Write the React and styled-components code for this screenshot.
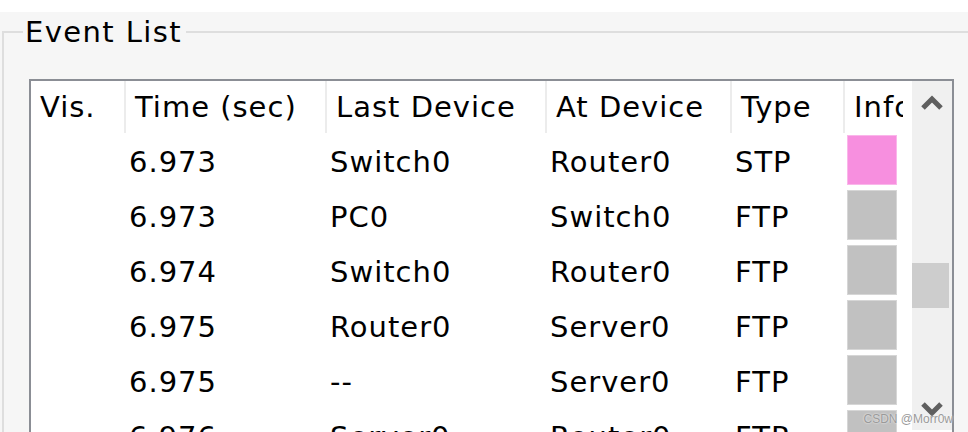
import React from "react"
import styled, { createGlobalStyle } from "styled-components"

const events = [
  { time: "6.973", last: "Switch0", at: "Router0", type: "STP", color: "#f78fdf" },
  { time: "6.973", last: "PC0", at: "Switch0", type: "FTP", color: "#c1c1c1" },
  { time: "6.974", last: "Switch0", at: "Router0", type: "FTP", color: "#c1c1c1" },
  { time: "6.975", last: "Router0", at: "Server0", type: "FTP", color: "#c1c1c1" },
  { time: "6.975", last: "--", at: "Server0", type: "FTP", color: "#c1c1c1" },
  { time: "6.976", last: "Server0", at: "Router0", type: "FTP", color: "#c1c1c1" },
]

const columns = ["Vis.", "Time (sec)", "Last Device", "At Device", "Type", "Info"]

function Chevron({ down }) {
  return (
    <svg width="22" height="17" viewBox="0 0 22 17">
      <path
        d={down ? "M2 4 L11 13 L20 4" : "M2 13 L11 4 L20 13"}
        fill="none"
        stroke="#5f5f5f"
        strokeWidth="5"
      />
    </svg>
  )
}

function App() {
  const rows = events.map((ev, i) => {
    return (
      <Row key={i}>
        <Cell />
        <Cell>{ev.time}</Cell>
        <Cell>{ev.last}</Cell>
        <Cell>{ev.at}</Cell>
        <Cell>{ev.type}</Cell>
        <InfoCell>
          <Swatch color={ev.color} />
        </InfoCell>
      </Row>
    )
  })

  return (
    <>
      <GlobalStyle />
      <Page>
        <Panel>
          <Group>
            <Legend>Event List</Legend>
            <ListBox>
              <Table>
                <Header>
                  {columns.map((c) => (
                    <HeadCell key={c}>{c}</HeadCell>
                  ))}
                </Header>
                {rows}
              </Table>
              <ScrollBar>
                <ArrowButton>
                  <Chevron />
                </ArrowButton>
                <Thumb />
                <ArrowButton bottom>
                  <Chevron down />
                </ArrowButton>
              </ScrollBar>
            </ListBox>
          </Group>
        </Panel>
        <Watermark>CSDN @Morr0w</Watermark>
      </Page>
    </>
  )
}

export default App

const GlobalStyle = createGlobalStyle`
  body {
    margin: 0;
    background: #ffffff;
    font-family: "DejaVu Sans", Verdana, sans-serif;
  }
`

const Page = styled.div`
  position: relative;
  width: 968px;
  height: 432px;
  overflow: hidden;
  padding-top: 12px;
  box-sizing: border-box;
`

const Panel = styled.div`
  height: 420px;
  background: #f6f6f6;
  padding: 3px 0 0 2px;
  box-sizing: border-box;
`

const Group = styled.fieldset`
  margin: 0;
  padding: 0;
  width: 1000px;
  height: 500px;
  border: 2px solid #dedede;
  border-right: none;
  box-sizing: border-box;
`

const Legend = styled.legend`
  margin-left: 19px;
  padding: 0 4px 0 2px;
  font-size: 29px;
  letter-spacing: 1.4px;
  line-height: 34px;
  color: #000;
`

const ListBox = styled.div`
  display: flex;
  margin-top: 30px;
  margin-left: 25px;
  width: 925px;
  height: 420px;
  border: 2px solid #8b8e95;
  border-bottom: none;
  box-sizing: border-box;
  background: #fff;
`

const Table = styled.div`
  width: 881px;
  overflow: hidden;
`

const gridCols = "95px 201px 220px 185px 113px 67px"

const Header = styled.div`
  display: grid;
  grid-template-columns: ${gridCols};
  height: 52px;
`

const HeadCell = styled.div`
  display: flex;
  align-items: center;
  padding-left: 9px;
  font-size: 29px;
  letter-spacing: 1px;
  color: #000;
  white-space: nowrap;
  overflow: hidden;
  border-right: 2px solid #ececec;
  &:last-child {
    border-right: none;
    clip-path: inset(0 9px 0 0);
  }
`

const Row = styled.div`
  display: grid;
  grid-template-columns: ${gridCols};
  height: 55px;
`

const Cell = styled.div`
  display: flex;
  align-items: center;
  padding: 3px 0 0 3px;
  font-size: 29px;
  letter-spacing: 1px;
  color: #000;
  white-space: nowrap;
`

const InfoCell = styled.div`
  padding: 2px 0 0 2px;
`

const Swatch = styled.div`
  width: 50px;
  height: 50px;
  background: ${(p) => p.color};
  box-shadow: inset 0 0 0 1px rgba(255, 255, 255, 0.35);
`

const ScrollBar = styled.div`
  display: flex;
  flex-direction: column;
  width: 40px;
  background: #f0f0f0;
  height: 349px;
`

const ArrowButton = styled.div`
  display: flex;
  justify-content: center;
  align-items: center;
  height: 44px;
  margin-top: ${(p) => (p.bottom ? "auto" : "0")};
`

const Thumb = styled.div`
  margin-top: 138px;
  width: 37px;
  height: 45px;
  background: #cdcdcd;
`

const Watermark = styled.div`
  position: absolute;
  right: 15px;
  bottom: 6px;
  font-family: "Liberation Sans", Arial, sans-serif;
  font-size: 12px;
  color: #9a9a9a;
  text-shadow: 0 0 2px #fff;
`
